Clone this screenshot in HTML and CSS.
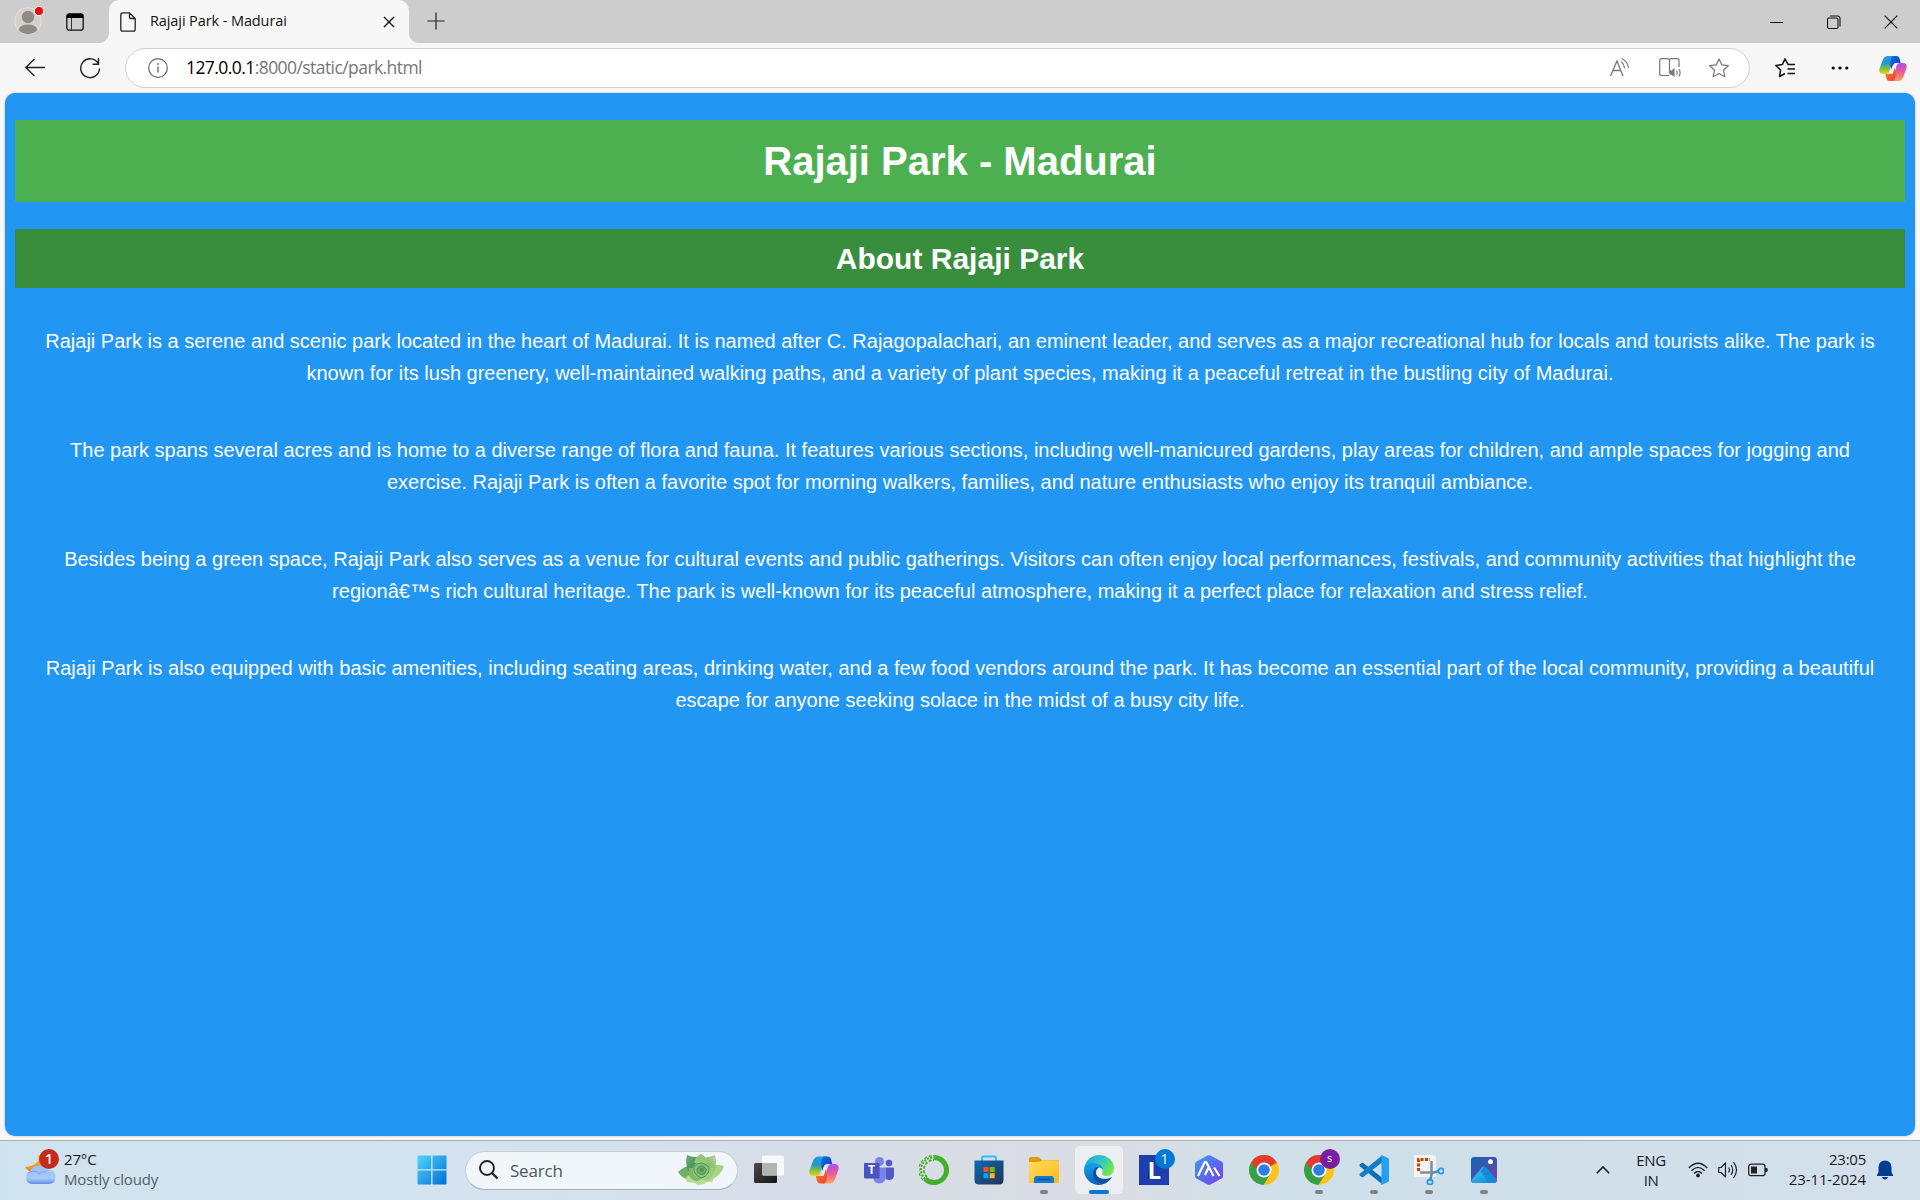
FILE: index.html
```html
<!DOCTYPE html>
<html lang="en">
<head>
<meta charset="utf-8">
<title>Rajaji Park - Madurai</title>
<link rel="stylesheet" href="styles.css">
</head>
<body>
<svg class="defs" width="0" height="0">
  <defs>
    <linearGradient id="cpA" x1="0" y1="0" x2="0" y2="1"><stop offset="0" stop-color="#18a0ee"/><stop offset=".4" stop-color="#1f96cc"/><stop offset=".7" stop-color="#7cc04a"/><stop offset="1" stop-color="#ffd000"/></linearGradient>
    <linearGradient id="cpB" x1="0" y1="0" x2="0" y2="1"><stop offset="0" stop-color="#a94ff2"/><stop offset=".5" stop-color="#ee5a92"/><stop offset="1" stop-color="#ffa45c"/></linearGradient>
    <linearGradient id="cpC" x1="0" y1="0" x2="1" y2="1"><stop offset="0" stop-color="#0f6fe0"/><stop offset="1" stop-color="#1a35c0"/></linearGradient>
    <linearGradient id="cpD" x1="0" y1="0" x2="1" y2="1"><stop offset="0" stop-color="#ff8a2c"/><stop offset="1" stop-color="#ee3a3a"/></linearGradient>
    <linearGradient id="win" x1="0" y1="0" x2="1" y2="1"><stop offset="0" stop-color="#50d5ff"/><stop offset="1" stop-color="#006fd2"/></linearGradient>
    <linearGradient id="tvB" x1="0" y1="0" x2="1" y2="1"><stop offset="0" stop-color="#4a4a4a"/><stop offset="1" stop-color="#151515"/></linearGradient>
    <linearGradient id="store" x1="0" y1="0" x2="1" y2="1"><stop offset="0" stop-color="#0a6ab4"/><stop offset="1" stop-color="#243356"/></linearGradient>
    <linearGradient id="fold" x1="0" y1="0" x2="1" y2="1"><stop offset="0" stop-color="#ffdc62"/><stop offset="1" stop-color="#fbb91c"/></linearGradient>
    <linearGradient id="edT" x1="0" y1="0" x2="1" y2=".6"><stop offset="0" stop-color="#1c9ee0"/><stop offset=".5" stop-color="#2fc2d0"/><stop offset="1" stop-color="#6cea4a"/></linearGradient>
    <linearGradient id="edB" x1="0" y1="0" x2="0" y2="1"><stop offset="0" stop-color="#1aa0e6"/><stop offset="1" stop-color="#0b62c0"/></linearGradient>
    <linearGradient id="hex" x1="0" y1="0" x2="1" y2="1"><stop offset="0" stop-color="#3aa0e6"/><stop offset=".5" stop-color="#5a6bee"/><stop offset="1" stop-color="#7a3cf0"/></linearGradient>
    <linearGradient id="pho" x1="0" y1="0" x2="1" y2="1"><stop offset="0" stop-color="#1565b5"/><stop offset=".6" stop-color="#4a4fa8"/><stop offset="1" stop-color="#8a45a0"/></linearGradient>
    <linearGradient id="mt" x1="0" y1="0" x2="1" y2="1"><stop offset="0" stop-color="#3fd4ff"/><stop offset="1" stop-color="#0d7bd0"/></linearGradient>
    <linearGradient id="cld" x1="0" y1="0" x2="0" y2="1"><stop offset="0" stop-color="#9cc0f8"/><stop offset=".7" stop-color="#a9c8f7"/><stop offset="1" stop-color="#5f8fe2"/></linearGradient>
    <linearGradient id="moon" x1="0" y1="0" x2="0" y2="1"><stop offset="0" stop-color="#f7c03c"/><stop offset="1" stop-color="#ee8420"/></linearGradient>
    <radialGradient id="leaf"><stop offset="0" stop-color="#4d9a5c"/><stop offset=".6" stop-color="#86bc70"/><stop offset="1" stop-color="#a9d083"/></radialGradient>
    <linearGradient id="leafL" x1="0" y1="0" x2="1" y2="1"><stop offset="0" stop-color="#6fae70"/><stop offset=".5" stop-color="#4a9560"/><stop offset="1" stop-color="#9acb7c"/></linearGradient>
    <linearGradient id="leafR" x1="1" y1="0" x2="0" y2="1"><stop offset="0" stop-color="#b4dc8c"/><stop offset="1" stop-color="#5ea263"/></linearGradient>
    <symbol id="copilot" viewBox="0 0 30 28">
      <path d="M10 .5H18L13.500 9L11.500 16Q10.300 20 7 20H4Q-.5 19.500.5 14.500L4 5Q5.500.500 10 .5Z" fill="url(#cpA)"/>
      <path d="M20 27.500H12L16.500 19L18.500 12Q19.700 8 23 8H26Q30.500 8.500 29.500 13.500L26 23Q24.500 27.500 20 27.500Z" fill="url(#cpB)"/>
      <path d="M14.500.500H18.500Q21.500.500 22.300 4L23.200 8H19Q16 8 14.800 11L13 15Q10.500 5 14.500.500Z" fill="url(#cpC)"/>
      <path d="M15.500 27.500H11.500Q8.500 27.500 7.700 24L6.800 20H9.500Q13 20 14.500 17.500L17 13Q19.500 23 15.500 27.500Z" fill="url(#cpD)"/>
      <path d="M15 10.500L13 17.500Q12.600 19 11.500 20H13.500Q14.700 20 15.200 18.500L17.500 10.500Q18 8.500 19.200 8Q15.800 8 15 10.500Z" fill="#f1eef3"/>
    </symbol>
    <symbol id="chrome" viewBox="0 0 30 30">
      <circle cx="15" cy="15" r="15" fill="#fcc419"/>
      <path d="M15 15L2 7.500A15 15 0 0 0 14.500 30L21.500 18.750Z" fill="#34a04a"/>
      <path d="M15 15H8.500L2 7.500A15 15 0 0 1 28 7.500Z" fill="#e33b2e"/>
      <circle cx="15" cy="15" r="7.500" fill="#fff"/><circle cx="15" cy="15" r="5.800" fill="#2f7de9"/>
    </symbol>
  </defs>
</svg>

<header class="tabstrip">
  <svg class="avatar" width="30" height="32" viewBox="0 0 30 32"><circle cx="14" cy="18" r="13.300" fill="#d4d1cd" stroke="#e2e0de"/><circle cx="14" cy="14" r="6.200" fill="#8f8a86"/><path d="M4.500 27Q6 21.500 14 21.500T23.500 27A13 13 0 0 1 4.500 27Z" fill="#8f8a86"/><circle cx="25" cy="8" r="4.600" fill="#e80b0b" stroke="#f4f4f4"/></svg>
  <svg class="workspace" width="18" height="18" viewBox="0 0 18 18"><rect x=".8" y=".8" width="16.400" height="16.400" rx="2.500" fill="none" stroke="#111" stroke-width="1.300"/><path d="M.8 5V3Q.8.8 3 .8H15Q17.200.8 17.200 3V5Z"/><path d="M5.500 5V17" stroke="#333"/></svg>
  <div class="tab">
    <svg width="16" height="20" viewBox="0 0 16 20"><path d="M3 .8H9.500L15.200 6.500V17Q15.200 19.200 13 19.200H3Q.8 19.200.8 17V3Q.8.8 3 .8ZM9.500 1V5Q9.500 6.500 11 6.500H15" fill="none" stroke="#222" stroke-width="1.300"/></svg>
    <span class="tab-title">Rajaji Park - Madurai</span>
    <svg class="tab-close" width="12" height="12" viewBox="0 0 12 12"><path d="M1 1L11 11M11 1L1 11" stroke="#111" stroke-width="1.400"/></svg>
  </div>
  <svg class="plus" width="18" height="18" viewBox="0 0 18 18"><path d="M9 .5V17.500M.5 9H17.500" stroke="#222" stroke-width="1.200"/></svg>
  <div class="window-buttons">
    <svg width="14" height="14" viewBox="0 0 14 14"><path d="M0 7.500H13" stroke="#111"/></svg>
    <svg width="14" height="14" viewBox="0 0 14 14"><rect x=".5" y="3" width="10.500" height="10.500" rx="1.500" fill="none" stroke="#111" stroke-width="1.100"/><path d="M3 1H10.500Q13 1 13 3.500V11.500" fill="none" stroke="#111" stroke-width="1.100"/></svg>
    <svg width="14" height="14" viewBox="0 0 14 14"><path d="M.7.700L13.300 13.300M13.300.700L.7 13.300" stroke="#111" stroke-width="1.200"/></svg>
  </div>
</header>

<nav class="toolbar">
  <svg width="20" height="20" viewBox="0 0 20 20"><path d="M9.500 1L.8 9.500L9.500 18M1 9.500H20" fill="none" stroke="#222" stroke-width="1.300"/></svg>
  <svg class="reload" width="22" height="22" viewBox="0 0 22 22"><path d="M19.500 7A9.400 9.400 0 1 0 20.500 11.500M19.500 1V7.200H13.500" fill="none" stroke="#222" stroke-width="1.400"/></svg>
  <div class="address">
    <svg width="20" height="20" viewBox="0 0 20 20"><circle cx="10" cy="10" r="9.300" fill="none" stroke="#666" stroke-width="1.200"/><path d="M10 8.500V14.500" stroke="#666" stroke-width="1.300"/><circle cx="10" cy="6" r=".9" fill="#666"/></svg>
    <span class="url"><b>127.0.0.1</b>:8000/static/park.html</span>
    <div class="address-tools">
      <svg width="22" height="20" viewBox="0 0 22 20"><path d="M1.500 18L8 3L14 18M3.800 12.500H11.700" fill="none" stroke="#777" stroke-width="1.300"/><path d="M12.500 4Q15 6 15.500 10M13 .800Q18 3 19.500 9.500" fill="none" stroke="#777" stroke-width="1.200" stroke-linecap="round"/></svg>
      <svg width="22" height="20" viewBox="0 0 22 20"><path d="M10 17.500H2.500Q.7 17.500.7 15.700V2.500Q.7.700 2.500.700H8.500Q10.500.700 10.500 2.500Q10.500.700 12.500.700H18Q20 .7 20 2.500V9M10.500 2.500V15" fill="none" stroke="#777" stroke-width="1.200"/><path d="M10.500 12.500H12.500L15.500 10V19L12.500 16.800H10.500Z" fill="#777"/><path d="M17.500 12.500Q18.800 14.500 17.500 17M19.800 11Q22.500 14.500 19.800 18.500" fill="none" stroke="#777" stroke-width="1.200"/></svg>
      <svg width="20" height="20" viewBox="0 0 20 20"><path d="M10 1L12.800 6.900L19.300 7.700L14.500 12.200L15.800 18.700L10 15.500L4.200 18.700L5.500 12.200L.7 7.700L7.200 6.900Z" fill="none" stroke="#777" stroke-width="1.200" stroke-linejoin="round"/></svg>
    </div>
  </div>
  <svg class="favs" width="21" height="20" viewBox="0 0 21 20"><path d="M13 6.500L10 .9L7.300 6.600L.8 7.400L5.600 12.100L4.500 18.500L10 15.500" fill="none" stroke="#151515" stroke-width="1.500" stroke-linejoin="round"/><path d="M12.500 6.500H20M12.500 11H20M12.500 15.500H20" stroke="#151515" stroke-width="1.400"/></svg>
  <svg class="dots" width="18" height="6" viewBox="0 0 18 6"><circle cx="2.200" cy="3" r="1.600"/><circle cx="9" cy="3" r="1.600"/><circle cx="15.800" cy="3" r="1.600"/></svg>
  <svg class="copilot-button" width="28" height="27"><use href="#copilot"/></svg>
</nav>

<main class="page">
  <h1>Rajaji Park - Madurai</h1>
  <h2>About Rajaji Park</h2>
  <p>Rajaji Park is a serene and scenic park located in the heart of Madurai. It is named after C. Rajagopalachari, an eminent leader, and serves as a major recreational hub for locals and tourists alike. The park is known for its lush greenery, well-maintained walking paths, and a variety of plant species, making it a peaceful retreat in the bustling city of Madurai.</p>
  <p>The park spans several acres and is home to a diverse range of flora and fauna. It features various sections, including well-manicured gardens, play areas for children, and ample spaces for jogging and exercise. Rajaji Park is often a favorite spot for morning walkers, families, and nature enthusiasts who enjoy its tranquil ambiance.</p>
  <p>Besides being a green space, Rajaji Park also serves as a venue for cultural events and public gatherings. Visitors can often enjoy local performances, festivals, and community activities that highlight the regionâ€™s rich cultural heritage. The park is well-known for its peaceful atmosphere, making it a perfect place for relaxation and stress relief.</p>
  <p>Rajaji Park is also equipped with basic amenities, including seating areas, drinking water, and a few food vendors around the park. It has become an essential part of the local community, providing a beautiful escape for anyone seeking solace in the midst of a busy city life.</p>
</main>

<footer class="taskbar">
  <div class="weather">
    <svg width="34" height="38" viewBox="0 0 34 38"><path d="M13 8Q16 18 0 20Q3 26 11 25L20 18L18 8Z" fill="url(#moon)"/><path d="M7 37A6.500 6.500 0 0 1 5 24.500Q8 18 15 18.500Q21 18.500 23.500 23Q30 22.500 30.500 30Q30.500 37 24 37Z" fill="url(#cld)"/><path d="M3 26Q9 22 14 26.500Q17 24.500 21 25" fill="none" stroke="#7da6ee" stroke-width="1.200"/><circle cx="24" cy="12" r="10" fill="#c42b1c"/></svg>
    <span class="weather-count">1</span>
    <div class="weather-text"><span>27°C</span><span class="muted">Mostly cloudy</span></div>
  </div>

  <div class="apps">
    <div class="app"><svg width="30" height="30" viewBox="0 0 30 30"><path d="M1.500.5H14.200V14.200H.5V1.500Q.5.500 1.500.500ZM15.500.5H28.500Q29.500.5 29.500 1.500V14.200H15.500ZM.5 15.500H14.200V29.500H1.500Q.5 29.500.5 28.500ZM15.500 15.500H29.500V28.500Q29.500 29.500 28.500 29.500H15.500Z" fill="url(#win)"/></svg></div>
    <div class="search">
      <svg width="20" height="20" viewBox="0 0 20 20"><circle cx="8" cy="8" r="7" fill="none" stroke="#222" stroke-width="1.900"/><path d="M13 13L18.500 18.500" stroke="#222" stroke-width="2.300"/></svg>
      <span>Search</span>
      <svg class="succulent" width="48" height="32" viewBox="0 0 48 32">
        <path d="M1 18Q6 13 12 12L22 20L17 26Q7 27 1 18Z" fill="#6fae66"/>
        <path d="M47 12Q40 10 34 12L26 20L33 26Q44 22 47 12Z" fill="#a5d37f"/>
        <path d="M9 23Q8 29 14 28.500Q18 28 21 31Q25 31 27 30Q31 27 35 28Q38 24 37 19L24 15Z" fill="#b7dc90"/>
        <path d="M10 1Q15 3.500 20 3L27 8L20 18L11 17Q8 8 10 1Z" fill="url(#leafL)"/>
        <path d="M38 1Q34 3 30 3L23 8L28 18L38 16Q40 8 38 1Z" fill="url(#leafR)"/>
        <path d="M24 0Q30 3 31 9H17Q18 3 24 0Z" fill="#93c678"/>
        <path d="M12 14Q10 24 18 27Q24 28 25 22L20 14Z" fill="#7fb86b"/>
        <path d="M36 13Q39 22 32 26Q26 28 24 22L28 14Z" fill="#9bcd78"/>
        <circle cx="24.500" cy="16" r="8.500" fill="url(#leaf)"/>
        <path d="M17 13Q24 5 32 13Q33 21 24.500 24Q16 21 17 13M20 15Q25 9 29 15Q29 20 24.500 20.500Q19.500 19 20 15M23 15.500Q25 13 27 16Q25 18 23 15.500" fill="none" stroke="#4a9057"/>
      </svg>
    </div>
    <div class="app"><svg width="30" height="30" viewBox="0 0 30 30"><rect x="0" y="8" width="23" height="20" rx="1.500" fill="url(#tvB)"/><rect x="8" y=".5" width="22" height="20" rx="1.500" fill="#fbfbfb" fill-opacity=".9"/><path d="M8 8H23V20.500H9.500Q8 20.500 8 19Z" fill="#b3b3b3"/></svg></div>
    <div class="app"><svg width="30" height="28"><use href="#copilot"/></svg></div>
    <div class="app"><svg width="30" height="28" viewBox="0 0 30 28"><circle cx="15.500" cy="5.500" r="4.500" fill="#7b83eb"/><circle cx="25" cy="7" r="3.300" fill="#5059c9"/><path d="M22 11.500H29Q30 11.500 30 12.500V19Q30 24 25 24Q22 24 21 22Z" fill="#5059c9"/><path d="M9 11.500H22V19Q22 27.500 15.500 27.500Q9 27.500 9 20Z" fill="#7b83eb"/><rect x="0" y="7" width="15.500" height="15.500" rx="1" fill="#4b53bc"/></svg><span class="teams-letter">T</span></div>
    <div class="app"><svg width="30" height="30" viewBox="0 0 30 30"><path d="M15 2.500A12.500 12.500 0 1 1 6 23.700" fill="none" stroke="#43b02a" stroke-width="5"/><path d="M8 22A9.800 9.800 0 0 1 15 5" fill="none" stroke="#43b02a" stroke-width="1.800" stroke-dasharray="3 1.500"/><path d="M6 24A12.500 12.500 0 0 1 15 2.300" fill="none" stroke="#43b02a" stroke-width="2.200" stroke-dasharray="2 1.300"/><path d="M4 25A14.300 14.300 0 0 1 15 .700" fill="none" stroke="#43b02a" stroke-width="1.300" stroke-dasharray="3 1.800"/></svg></div>
    <div class="app"><svg width="30" height="30" viewBox="0 0 30 30"><path d="M8 7V3Q8 1.500 9.500 1.500H20.500Q22 1.500 22 3V7" fill="none" stroke="#2cc0f2" stroke-width="2"/><path d="M.5 5.500H29.500V25Q29.500 29.500 25 29.500H5Q.5 29.500.5 25Z" fill="url(#store)"/><path d="M9.500 12H14.500V17H9.500Z" fill="#f25022"/><path d="M15.700 12H20.700V17H15.700Z" fill="#7fba00"/><path d="M9.500 18.200H14.500V23.200H9.500Z" fill="#00a4ef"/><path d="M15.700 18.200H20.700V23.200H15.700Z" fill="#ffb900"/></svg></div>
    <div class="app running"><svg width="30" height="28" viewBox="0 0 30 28"><path d="M0 3Q0 1 2 1H9Q10 1 13 4H28Q30 4 30 6V12H0Z" fill="#dc9c0c"/><path d="M0 6H9Q11 6 13 4.200H28Q30 4.200 30 6V27H0Z" fill="url(#fold)"/><path d="M5 27V23Q5 20 8 20H22Q25 20 25 23V27Z" fill="#1478cf"/><path d="M8.500 23.500H21.500" stroke="#0b4f9c" stroke-width="1.300"/></svg></div>
    <div class="app active"><svg width="30" height="30" viewBox="0 0 30 30"><path d="M.2 13.500C1.500 5 8 0 15 0C24 0 30 6.500 30 13C30 18 26.500 21 22.500 21C19 21 17.500 19.500 18.500 17.500C20.500 11 9 7 .2 13.500Z" fill="url(#edT)"/><path d="M0 15C0 9 5 7.500 10 8C16 8.500 19 12 19 15C15 9.500 9.500 14 10 20C10.500 25 14 29 19 29.500C9 32 0 24.500 0 15Z" fill="url(#edB)"/><path d="M11 13C6.500 20 10 27.500 18 29.500C22.500 28.500 26 25.500 28 22C22 25.500 12 24 12 17.500Q12 14.500 15 12Q12.500 11.500 11 13Z" fill="#0c559d"/></svg></div>
    <div class="app"><svg width="30" height="30" viewBox="0 0 30 30"><rect width="30" height="30" fill="#1d3eac"/><path d="M11 6L8.500 24L20 23L12 21Z" fill="#082a61"/></svg><span class="l-letter">L</span><span class="badge blue">1</span></div>
    <div class="app"><svg width="28" height="30" viewBox="0 0 28 30"><path d="M12.500.500Q14 0 15.500.5L26.500 6.500Q28 7.500 28 9V21Q28 22.500 26.500 23.500L15.500 29.500Q14 30 12.500 29.500L1.500 23.500Q0 22.500 0 21V9Q0 7.500 1.500 6.500Z" fill="url(#hex)"/><path d="M3 21L9.500 7.500Q10.500 6 11.500 7.500L18.500 21M10 20L13.500 12.500M19 12.500L24.500 21" fill="none" stroke="#fff" stroke-width="2.200"/></svg></div>
    <div class="app"><svg width="30" height="30"><use href="#chrome"/></svg></div>
    <div class="app running"><svg width="30" height="30"><use href="#chrome"/></svg><span class="badge purple">s</span></div>
    <div class="app running"><svg width="30" height="30" viewBox="0 0 30 30"><path d="M.7 9.500L2.500 8Q3.500 7.500 4.300 8L23 22.500V29L1 11.500Q0 10.500.7 9.500Z" fill="#0a70b8"/><path d="M.7 20.500L2.500 22Q3.500 22.500 4.300 22L23 7.500V.5L1 18.500Q0 19.500.7 20.500Z" fill="#147dc5"/><path d="M21.500.7Q22.500 0 23.500.4L29 3Q30 3.500 30 4.500V25.500Q30 26.500 29 27L23.500 29.600Q22 30 21.500 29Q22.500 29 22.500 27V3Q22.500 1 21.500.700Z" fill="#25a0f0"/></svg></div>
    <div class="app running"><svg width="30" height="30" viewBox="0 0 30 30"><rect x="0" y="0" width="22" height="22" rx="2" fill="#f3f3f3"/><path d="M4.500 16V4.500H16" fill="none" stroke="#d83b01" stroke-width="3" stroke-dasharray="3 1.500"/><path d="M17.500 6V20L16 26M6 17.500H20L25 16" fill="none" stroke="#888d91" stroke-width="2.500"/><circle cx="27" cy="16" r="2.600" fill="none" stroke="#259bdd" stroke-width="1.800"/><circle cx="16" cy="27" r="2.600" fill="none" stroke="#259bdd" stroke-width="1.800"/><path d="M18 18L24.500 16.500M18 18L16.500 24.500" stroke="#259bdd" stroke-width="1.400"/></svg></div>
    <div class="app running"><svg width="26" height="26" viewBox="0 0 26 26"><rect width="26" height="26" rx="3" fill="url(#pho)"/><path d="M.5 23L11 10.500Q13 8.500 15 10.500L25.500 22.500Q25 26 22 26H3Q1 26 .5 23Z" fill="url(#mt)"/><path d="M12.500 10Q14 9.500 15 10.500L25.500 22.500Q24.500 26 22 26H18L9.500 14Z" fill="#148ad8"/><circle cx="19.500" cy="4.800" r="2.500" fill="#fff"/></svg></div>
  </div>

  <div class="tray">
    <svg width="14" height="8" viewBox="0 0 14 8"><path d="M.8 7.200L7 1L13.200 7.200" fill="none" stroke="#1a1a1a" stroke-width="1.600"/></svg>
    <div class="lang"><span>ENG</span><span>IN</span></div>
    <svg class="wifi" width="20" height="16" viewBox="0 0 20 16"><path d="M.8 6Q10-3.500 19.200 6M3.500 8.800Q10 2 16.500 8.800M6 11.500Q10 7.500 14 11.500" fill="none" stroke="#222" stroke-width="1.400"/><circle cx="10" cy="13.500" r="1.900" fill="#222"/></svg>
    <svg class="speaker" width="20" height="18" viewBox="0 0 20 18"><path d="M.7 6.500H3L7.500 2V16L3 11.500H.7Z" fill="none" stroke="#222" stroke-width="1.200" stroke-linejoin="round"/><path d="M10.500 6.500Q12.500 9 10.500 11.500M13 4Q16.500 9 13 14M15.500 1.200Q21.500 9 15.500 16.800" fill="none" stroke="#222" stroke-width="1.200"/></svg>
    <svg class="battery" width="20" height="14" viewBox="0 0 20 14"><rect x=".7" y="1.200" width="16.300" height="11.500" rx="2.500" fill="none" stroke="#222" stroke-width="1.300"/><rect x="3" y="3.500" width="6" height="7" fill="#222"/><path d="M17 5H18.500Q19.800 5 19.800 7T18.500 9H17Z" fill="#222"/></svg>
    <div class="clock"><span class="time">23:05</span><span class="date">23-11-2024</span></div>
    <svg class="bell" width="16" height="20" viewBox="0 0 16 20"><path d="M8 .5Q14 .5 14.500 7V12L16 15V16H0V15L1.500 12V7Q2 .5 8 .5ZM5 17H11Q10.500 19.500 8 19.500T5 17Z" fill="#003e92"/></svg>
  </div>
</footer>
</body>
</html>
```
FILE: styles.css
```css
* { box-sizing: border-box; }

body {
  margin: 0;
  width: 1920px;
  height: 1200px;
  overflow: hidden;
  display: flex;
  flex-direction: column;
  background: #f7f7f7;
  font-family: "Open Sans", "Noto Sans", sans-serif;
}

svg { display: block; flex: none; }
.defs { position: absolute; }

/* Browser tab strip */
.tabstrip {
  flex: none;
  height: 43px;
  display: flex;
  align-items: center;
  background: #cdcdcd;
}
.avatar { margin: -5px 0 0 14px; }
.workspace { margin: 0 25px 0 22px; }
.tab {
  position: relative;
  width: 300px;
  height: 43px;
  padding: 0 14px 0 11px;
  display: flex;
  align-items: center;
  background: #f7f7f7;
  border-radius: 10px 10px 0 0;
}
.tab::before,
.tab::after {
  content: "";
  position: absolute;
  bottom: 0;
  width: 10px;
  height: 10px;
}
.tab::before { left: -10px; background: radial-gradient(circle at 0 0, #cdcdcd 9.5px, #f7f7f7 10.5px); }
.tab::after { right: -10px; background: radial-gradient(circle at 100% 0, #cdcdcd 9.5px, #f7f7f7 10.5px); }
.tab-title {
  margin: -2px 0 0 14px;
  font-size: 14.5px;
  letter-spacing: -0.1px;
  color: #111;
  white-space: nowrap;
}
.tab-close { margin-left: auto; }
.plus { margin: -1px 0 0 18px; }
.window-buttons {
  margin-left: auto;
  padding-right: 22px;
  display: flex;
  gap: 43px;
}

/* Toolbar */
.toolbar {
  flex: none;
  height: 50px;
  padding-left: 25px;
  display: flex;
  align-items: center;
}
.reload { margin-left: 34px; }
.address {
  width: 1625px;
  height: 40px;
  margin-left: 24px;
  padding: 0 20px 0 22px;
  display: flex;
  align-items: center;
  background: #fff;
  border: 1px solid #cfcfcf;
  border-radius: 20px;
}
.url {
  margin: -2px 0 0 18px;
  font-size: 17.5px;
  letter-spacing: -0.57px;
  color: #767676;
  white-space: nowrap;
}
.url b { font-weight: 400; color: #000; }
.address-tools {
  margin-left: auto;
  display: flex;
  gap: 28px;
}
.favs { margin-left: 25px; }
.dots { margin-left: 35px; }
.copilot-button { margin-left: 30px; }

/* Web page */
.page {
  flex: none;
  height: 1043px;
  margin: 0 5px;
  padding: 27px 10px 0;
  background: #2196f3;
  border-radius: 10px;
  box-shadow: 0 0 2px rgba(0, 0, 0, 0.35);
  color: #fff;
  font-family: "Liberation Sans", Arial, sans-serif;
  text-align: center;
}
.page h1 {
  height: 82px;
  margin: 0 0 27px;
  background: #4caf50;
  font-size: 40px;
  line-height: 83px;
}
.page h2 {
  height: 59px;
  margin: 0 0 37px;
  background: #388e3c;
  font-size: 30px;
  line-height: 60px;
}
.page p {
  margin: 0 0 45px;
  padding: 0 25px;
  font-size: 20px;
  line-height: 32px;
}

/* Taskbar */
.taskbar {
  flex: none;
  height: 60px;
  margin-top: 4px;
  padding-bottom: 1px;
  border-top: 1px solid #a7b0b6;
  display: flex;
  align-items: center;
  background: linear-gradient(90deg, #cfe3ee 0, #d3e3ef 440px, #d6dde8 800px, #dadde2 1100px, #cfe0ea 1280px, #cfdfea 1500px, #d3e0ec 1920px);
}
.weather {
  position: relative;
  width: 379px;
  padding-left: 25px;
  margin-right: 25.5px;
  display: flex;
  align-items: center;
}
.weather svg { margin-top: -8px; }
.weather-count {
  position: absolute;
  left: 39px;
  top: 0;
  width: 20px;
  color: #fff;
  font-size: 14px;
  font-weight: 600;
  line-height: 16px;
  text-align: center;
}
.weather-text {
  margin: -2px 0 0 5px;
  display: flex;
  flex-direction: column;
  font-size: 15px;
  line-height: 20px;
  letter-spacing: -0.15px;
  color: #1b1b1b;
}
.weather-text .muted { color: #555f66; }
.apps { display: flex; align-items: center; }
.app {
  position: relative;
  width: 55px;
  height: 48px;
  display: flex;
  align-items: center;
  justify-content: center;
}
.app svg { position: relative; }
.running::after,
.active::after {
  content: "";
  position: absolute;
  left: 23.5px;
  bottom: 0;
  width: 8px;
  height: 4px;
  border-radius: 2px;
  background: #7c8388;
}
.active::before {
  content: "";
  position: absolute;
  left: 3.5px;
  top: 0;
  width: 48px;
  height: 48px;
  border-radius: 5px;
  background: #eceef2;
}
.active::after { left: 17.5px; width: 20px; background: #0078d4; }
.search {
  width: 273px;
  height: 39px;
  margin: 0 3.5px 0 5.5px;
  padding: 0 12px 0 13px;
  display: flex;
  align-items: center;
  border: 1px solid #c3d0da;
  border-bottom-color: #a5b1bb;
  border-radius: 20px;
  background: #f1f6fa;
  color: #50565b;
  font-size: 17px;
  letter-spacing: -0.2px;
}
.search span { margin-left: 11px; }
.succulent { margin-left: auto; }
.teams-letter,
.l-letter,
.badge {
  position: absolute;
  color: #fff;
  text-align: center;
}
.teams-letter {
  left: 12px;
  top: 16px;
  width: 16px;
  font-size: 12px;
  font-weight: 700;
  line-height: 16px;
}
.l-letter {
  left: 21px;
  top: 11px;
  font: 700 24px/26px "Open Sans", sans-serif;
}
.badge {
  left: 28px;
  top: 3px;
  width: 20px;
  height: 20px;
  border-radius: 50%;
  font-size: 14px;
  line-height: 19px;
}
.blue { background: #0078d4; }
.purple { background: #7b1fa2; font-size: 11px; line-height: 17px; }
.tray {
  margin-left: 84.5px;
  display: flex;
  align-items: center;
  color: #1b1b1b;
  font-size: 15px;
  line-height: 20px;
}
.lang {
  width: 40px;
  margin: 0 17px 0 21px;
  display: flex;
  flex-direction: column;
  align-items: center;
  letter-spacing: -0.4px;
}
.wifi { margin-right: 10px; }
.speaker { margin-right: 10px; }
.clock {
  width: 98px;
  margin-top: -2px;
  display: flex;
  flex-direction: column;
  align-items: flex-end;
}
.time { letter-spacing: -0.25px; }
.date { letter-spacing: -0.1px; }
.bell { margin-left: 11px; }
```
